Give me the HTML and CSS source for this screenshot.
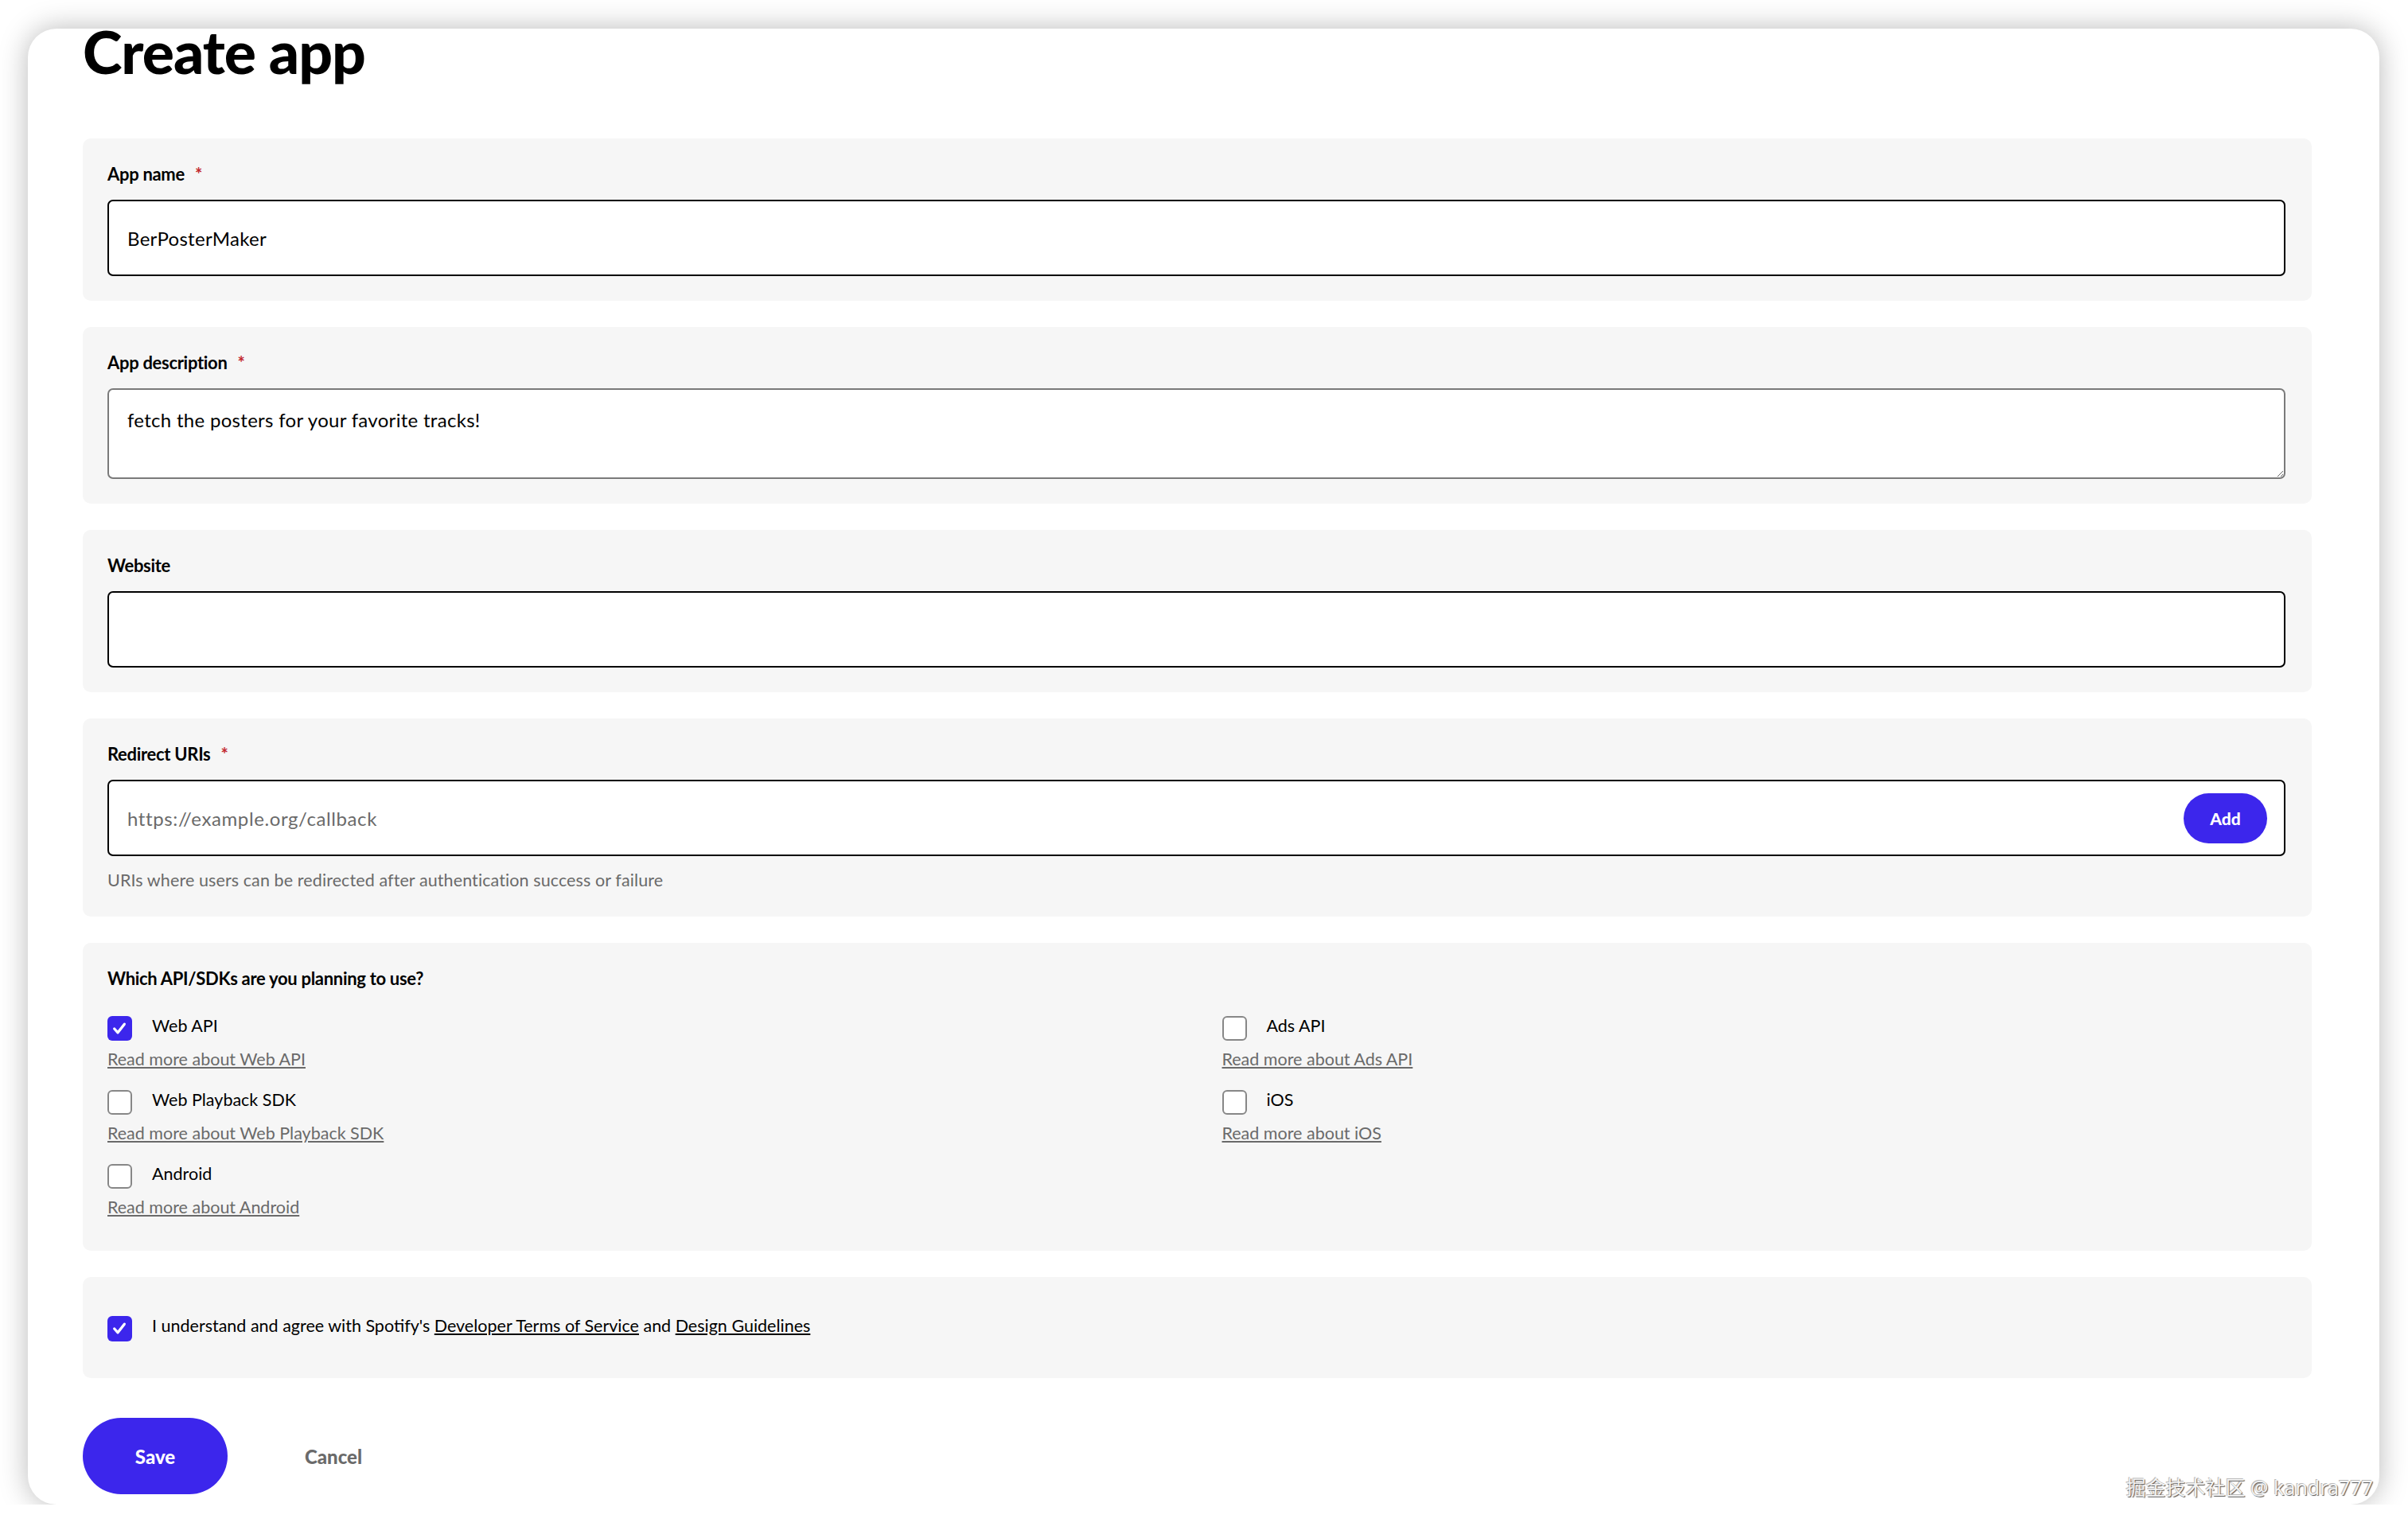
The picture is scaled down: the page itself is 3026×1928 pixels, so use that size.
FILE: index.html
```html
<!DOCTYPE html>
<html lang="en">
<head>
    <meta charset="UTF-8">
    <meta name="viewport" content="width=device-width, initial-scale=1.0">
    <title>Create app</title>
    <link rel="stylesheet" href="styles.css">
</head>
<body>
    <div class="window">
        <h1 class="title">Create app</h1>
        <form class="form" id="createForm">
            <div class="group">
                <label class="label" for="appName">App name <span class="req">*</span></label>
                <input class="field" type="text" id="appName" value="BerPosterMaker">
            </div>
            <div class="group">
                <label class="label" for="appDesc">App description <span class="req">*</span></label>
                <textarea class="field area" id="appDesc">fetch the posters for your favorite tracks!</textarea>
            </div>
            <div class="group">
                <label class="label" for="website">Website</label>
                <input class="field" type="text" id="website">
            </div>
            <div class="group">
                <label class="label" for="redirect">Redirect URIs <span class="req">*</span></label>
                <div class="field url-row">
                    <input class="url-input" type="text" id="redirect" placeholder="https://example.org/callback">
                    <button class="add-btn" type="button">Add</button>
                </div>
                <p class="hint">URIs where users can be redirected after authentication success or failure</p>
            </div>
            <div class="group apis">
                <div class="label">Which API/SDKs are you planning to use?</div>
                <div class="api-grid">
                    <div class="api">
                        <label class="check-row">
                            <span class="box checked">
                                <svg viewBox="0 0 32 32" width="32" height="32"><path d="M9 16.5 L13.5 21.5 L22 10.5" fill="none" stroke="#fff" stroke-width="3.4" stroke-linecap="round" stroke-linejoin="round"/></svg>
                            </span>
                            <span class="check-text">Web API</span>
                        </label>
                        <a class="more" href="#">Read more about Web API</a>
                    </div>
                    <div class="api">
                        <label class="check-row"><span class="box"></span><span class="check-text">Ads API</span></label>
                        <a class="more" href="#">Read more about Ads API</a>
                    </div>
                    <div class="api">
                        <label class="check-row"><span class="box"></span><span class="check-text">Web Playback SDK</span></label>
                        <a class="more" href="#">Read more about Web Playback SDK</a>
                    </div>
                    <div class="api">
                        <label class="check-row"><span class="box"></span><span class="check-text">iOS</span></label>
                        <a class="more" href="#">Read more about iOS</a>
                    </div>
                    <div class="api">
                        <label class="check-row"><span class="box"></span><span class="check-text">Android</span></label>
                        <a class="more" href="#">Read more about Android</a>
                    </div>
                </div>
            </div>
            <div class="group terms">
                <label class="check-row terms-row">
                    <span class="box checked">
                        <svg viewBox="0 0 32 32" width="32" height="32"><path d="M9 16.5 L13.5 21.5 L22 10.5" fill="none" stroke="#fff" stroke-width="3.4" stroke-linecap="round" stroke-linejoin="round"/></svg>
                    </span>
                    <span class="check-text">I understand and agree with Spotify's <a class="dark-link" href="#">Developer Terms of Service</a> and <a class="dark-link" href="#">Design Guidelines</a></span>
                </label>
            </div>
        </form>
        <div class="actions">
            <button class="save-btn" type="button">Save</button>
            <button class="cancel-btn" type="button">Cancel</button>
        </div>
    </div>
    <div class="watermark">掘金技术社区 @ kandra777</div>
</body>
</html>
```

FILE: styles.css
```css
body {
    margin: 0;
    background: #ffffff;
    font-family: "Lato", "Noto Sans", sans-serif;
    color: #000;
    overflow: hidden;
}
.window {
    box-sizing: border-box;
    width: 2955px;
    height: 1855px;
    margin: 36px 0 0 35px;
    padding: 0 85px 0 69px;
    background: #fff;
    border-radius: 36px;
    box-shadow: 0 0 36px rgba(0,0,0,0.28);
}
.title {
    margin: 0 0 82px;
    font-size: 75px;
    line-height: 56px;
    font-weight: 900;
    letter-spacing: -1px;
}
.form {
    display: flex;
    flex-direction: column;
    gap: 33px;
}
.group {
    background: #f6f6f6;
    border-radius: 10px;
    padding: 32px 33px 31px 31px;
    display: flex;
    flex-direction: column;
}
.label {
    font-size: 22px;
    line-height: 26px;
    font-weight: 700;
    margin-bottom: 19px;
    letter-spacing: -0.3px;
}
.req {
    color: #c2272d;
    margin-left: 8px;
}
.field {
    box-sizing: border-box;
    height: 96px;
    border: 2px solid #000;
    border-radius: 7px;
    background: #fff;
    padding: 0 23px;
    font-family: inherit;
    font-size: 24px;
    letter-spacing: 0.3px;
    color: #000;
    outline: none;
}
.area {
    height: 114px;
    border-color: #7a7a7a;
    padding-top: 24px;
    line-height: 28px;
    resize: vertical;
}
.url-row {
    display: flex;
    align-items: center;
    padding-right: 21px;
}
.url-input {
    flex: 1;
    border: none;
    outline: none;
    background: transparent;
    font-family: inherit;
    font-size: 24px;
    letter-spacing: 0.6px;
    color: #000;
    padding: 0;
}
.url-input::placeholder {
    color: #6a6a6a;
}
.add-btn {
    width: 105px;
    height: 63px;
    border: none;
    border-radius: 32px;
    background: #3c26ec;
    color: #fff;
    font-family: inherit;
    font-size: 21px;
    font-weight: 900;
}
.hint {
    margin: 18px 0 3px;
    font-size: 21.5px;
    line-height: 24px;
    letter-spacing: 0.1px;
    color: #6a6a6a;
}
.apis {
    padding-bottom: 43px;
}
.apis .label {
    margin-bottom: 34px;
}
.api-grid {
    display: grid;
    grid-template-columns: 1fr 1fr;
    column-gap: 64px;
    row-gap: 27px;
}
.api {
    display: flex;
    flex-direction: column;
    align-items: flex-start;
}
.check-row {
    display: flex;
    align-items: flex-start;
    gap: 25px;
}
.box {
    box-sizing: border-box;
    width: 31px;
    height: 31px;
    border: 2px solid #878787;
    border-radius: 6px;
    background: #fff;
    flex-shrink: 0;
}
.box.checked {
    border: none;
    background: #3c26ec;
}
.box svg {
    display: block;
    width: 31px;
    height: 31px;
}
.check-text {
    font-size: 21.5px;
    line-height: 24px;
}
.more {
    margin-top: 11px;
    font-size: 21.5px;
    line-height: 24px;
    color: #6a6a6a;
}
.terms {
    padding: 49px 32px 46px 31px;
}
.terms-row {
    align-items: center;
}
.terms-row .box {
    height: 32px;
}
.terms-row .check-text {
    margin-top: -9px;
}
.dark-link {
    color: #000;
}
.actions {
    display: flex;
    align-items: center;
    gap: 97px;
    margin-top: 50px;
}
.save-btn {
    width: 182px;
    height: 96px;
    border: none;
    border-radius: 48px;
    background: #3c26ec;
    color: #fff;
    font-family: inherit;
    font-size: 24px;
    font-weight: 900;
}
.cancel-btn {
    border: none;
    background: none;
    padding: 0;
    color: #6a6a6a;
    font-family: inherit;
    font-size: 24px;
    font-weight: 900;
}
.watermark {
    position: absolute;
    right: 44px;
    top: 1850px;
    font-family: "Noto Sans", "Noto Sans CJK SC", sans-serif;
    font-size: 25px;
    color: #f4f4f4;
    text-shadow: 1px 1px 1px #555, -1px -1px 0 #bbb;
}
```
